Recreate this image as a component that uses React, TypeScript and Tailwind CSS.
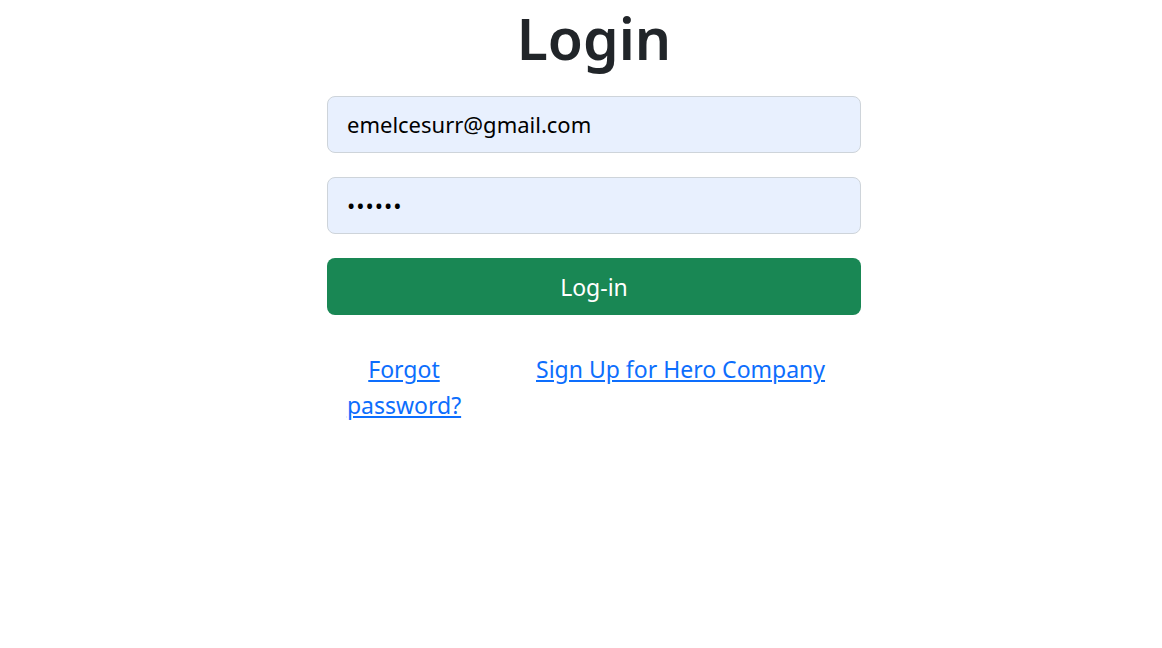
import React from "react";

export default function App() {
  const font = { fontFamily: '"Noto Sans", "Open Sans", sans-serif' };
  return (
    <div className="min-h-[648px] w-full bg-white" style={font}>
      <div className="ml-[327px] w-[534px] flex flex-col">
        <h1 className="text-center text-[57px] leading-[1.2] font-semibold text-[#212529] mt-[4px] mb-[24px]">
          Login
        </h1>
        <div className="h-[57px] rounded-[8px] border border-[#ced4da] bg-[#e8f0fe] px-[19px] flex items-center text-[22px] text-[#000]">
          emelcesurr@gmail.com
        </div>
        <div className="h-[57px] mt-[24px] rounded-[8px] border border-[#ced4da] bg-[#e8f0fe] px-[19px] flex items-center text-[22px] text-[#000] tracking-[1px]">
          ••••••
        </div>
        <button className="h-[57px] mt-[24px] rounded-[8px] bg-[#198754] text-white text-[23px] flex items-center justify-center">
          Log-in
        </button>
        <div className="flex mt-[36px] text-[23px] leading-[36px]">
          <div className="w-[154px] text-center">
            <a href="#" className="text-[#0d6efd] underline">
              Forgot password?
            </a>
          </div>
          <div className="ml-[55px]">
            <a href="#" className="text-[#0d6efd] underline">
              Sign Up for Hero Company
            </a>
          </div>
        </div>
      </div>
    </div>
  );
}
